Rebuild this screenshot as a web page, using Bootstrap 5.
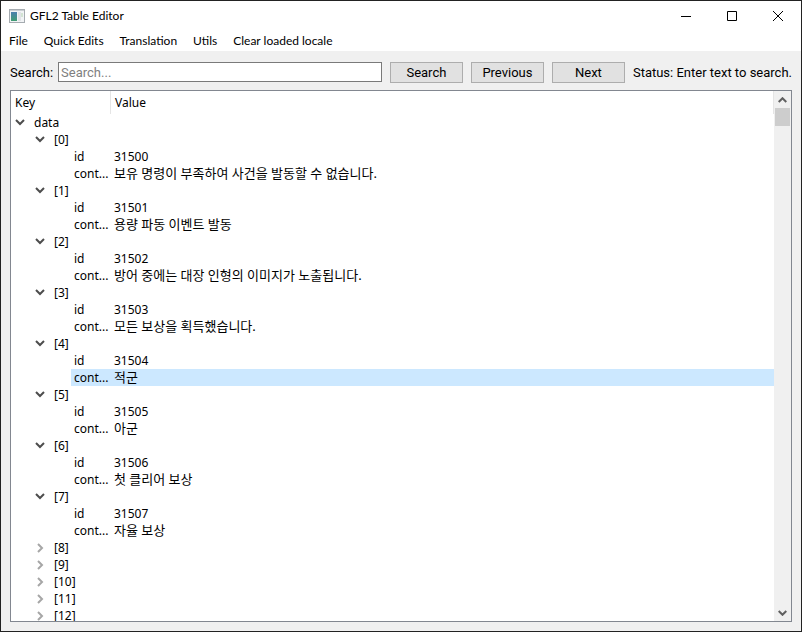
<!DOCTYPE html>
<html lang="en">
<head>
<meta charset="utf-8">
<meta name="viewport" content="width=device-width, initial-scale=1">
<title>GFL2 Table Editor</title>
<link href="https://cdn.jsdelivr.net/npm/bootstrap@5.3.0/dist/css/bootstrap.min.css" rel="stylesheet">
<style>
body { font: 12px/17px "Noto Sans", "Noto Sans CJK KR", sans-serif; color: #000; }
.app-window { border: 1px solid #222; background: #f0f0f0; }
.app-head { font-family: Lato, "Noto Sans", sans-serif; }
.title-bar { height: 29px; padding-left: 8px; }
.title-bar h1 { font-size: 12px; line-height: 17px; padding-left: 5px; }
.caption-btn { width: 46px; height: 29px; border: 0; background: none; padding: 0; display: flex; align-items: center; justify-content: center; }
.caption-btn:hover { background: #e5e5e5; }
.menu-row { height: 21px; gap: 16px; padding-left: 8px; }
.menu-row button { border: 0; background: none; padding: 0; color: #000; line-height: 21px; }
.work-area { padding: 11px 9px 9px; gap: 7px; min-height: 0; }
.search-row { font-family: Roboto, sans-serif; font-size: 13px; line-height: 21px; gap: 8px; height: 21px; }
.search-row label { margin-right: -3px; }
.search-row .form-control { height: 20px; min-width: 0; border: 1px solid #7a7a7a; border-radius: 0; padding: 0 2px; font-size: 13px; line-height: 18px; color: #000; }
.search-row .form-control::placeholder { color: #7f7f7f; }
.search-row .btn { width: 73px; height: 21px; border: 1px solid #adadad; border-radius: 0; background: #e1e1e1; padding: 0; font-size: 13px; line-height: 19px; color: #000; }
.search-row output { line-height: 21px; }
.tree-frame { border: 1px solid #828790; background: #fff; min-height: 0; }
.tree { width: 100%; table-layout: fixed; border-collapse: separate; border-spacing: 0; }
.tree th { height: 23px; padding: 0 4px; font-weight: 400; border-right: 1px solid #e5e5e5; }
.tree td { height: 17px; padding: 0 3px; line-height: 17px; white-space: nowrap; overflow: hidden; }
.tree .key-col { width: 100px; }
.tree td.hangul { font-size: 13px; }
.node { display: flex; align-items: center; height: 17px; overflow: hidden; }
.depth-1 { padding-left: 20px; }
.leaf { display: block; margin-left: 57px; margin-right: -3px; padding-left: 3px; height: 17px; overflow: hidden; }
.picked .leaf, .picked .hangul { background: #cce8ff; }
.twist { width: 20px; height: 17px; border: 0; background: none; padding: 0; color: #4d4d4d; display: flex; align-items: center; }
.twist.closed { color: #a6a6a6; }
.scroll-track { width: 17px; padding-left: 1px; background: #f0f0f0; }
.scroll-track button { width: 15px; height: 17px; border: 0; background: none; padding: 0; display: flex; align-items: center; justify-content: center; color: #606060; }
.scroll-thumb { width: 15px; height: 18px; background: #cdcdcd; }
</style>
<script src="https://cdn.jsdelivr.net/npm/bootstrap@5.3.0/dist/js/bootstrap.bundle.min.js" defer></script>
</head>
<body>
<svg class="d-none" aria-hidden="true">
  <symbol id="down" viewBox="0 0 12 12"><path d="M2 3l4 4 4-4" fill="none" stroke="currentColor" stroke-width="2"/></symbol>
  <symbol id="right" viewBox="0 0 12 12"><path d="M4 2l4 4-4 4" fill="none" stroke="currentColor" stroke-width="2"/></symbol>
</svg>
<div class="app-window vh-100 d-flex flex-column overflow-hidden">
  <header class="app-head bg-white">
    <div class="title-bar d-flex align-items-center">
      <svg width="16" height="14" viewBox="0 0 16 14" aria-hidden="true">
        <defs><linearGradient id="g" x1="0" y1="0" x2="0" y2="1"><stop offset="0" stop-color="#4b7fae"/><stop offset="1" stop-color="#3f9c72"/></linearGradient></defs>
        <rect x=".5" y=".5" width="15" height="13" fill="#f1f3f5" stroke="#a5abb0"/>
        <path d="M1 1.500h14" stroke="#c9ced2"/>
        <rect x="2" y="3" width="6" height="9" fill="url(#g)"/>
        <rect x="9" y="3" width="3" height="9" fill="#e0e3e6"/>
        <rect x="12" y="4" width="2" height="4" fill="#d2e3d3"/>
      </svg>
      <h1 class="mb-0 fw-normal flex-grow-1">GFL2 Table Editor</h1>
      <button class="caption-btn" type="button" aria-label="Minimize"><svg width="10" height="10"><path d="M0 5.500h10" stroke="#000"/></svg></button>
      <button class="caption-btn" type="button" aria-label="Maximize"><svg width="10" height="10"><path d="M.5.5h9v9h-9z" fill="none" stroke="#000"/></svg></button>
      <button class="caption-btn" type="button" aria-label="Close"><svg width="10" height="10"><path d="M0 0l10 10M10 0L0 10" stroke="#000"/></svg></button>
    </div>
    <nav class="menu-row d-flex" aria-label="Main menu">
      <button type="button">File</button><button type="button">Quick Edits</button><button type="button">Translation</button><button type="button">Utils</button><button type="button">Clear loaded locale</button>
    </nav>
  </header>
  <main class="work-area d-flex flex-column flex-grow-1">
    <form class="search-row d-flex align-items-start flex-shrink-0">
      <label for="query">Search:</label>
      <input id="query" class="form-control flex-grow-1 w-auto" type="text" placeholder="Search...">
      <button class="btn flex-shrink-0" type="button">Search</button>
      <button class="btn flex-shrink-0" type="button">Previous</button>
      <button class="btn flex-shrink-0" type="button">Next</button>
      <output class="text-nowrap p-0" for="query">Status: Enter text to search.</output>
    </form>
    <div class="tree-frame d-flex flex-grow-1">
      <div class="flex-grow-1 overflow-hidden">
        <table class="tree">
          <thead><tr><th class="key-col" scope="col">Key</th><th scope="col">Value</th></tr></thead>
          <tbody id="rows"></tbody>
        </table>
      </div>
      <div class="scroll-track d-flex flex-column flex-shrink-0">
        <button type="button" aria-label="Scroll up"><svg width="9" height="6"><path d="M.7 5l3.800-3.800L8.300 5" fill="none" stroke="currentColor" stroke-width="2"/></svg></button>
        <div class="scroll-thumb"></div>
        <button class="mt-auto" type="button" aria-label="Scroll down"><svg width="9" height="6"><path d="M.7 1l3.800 3.800L8.300 1" fill="none" stroke="currentColor" stroke-width="2"/></svg></button>
      </div>
    </div>
  </main>
</div>
<script>
const entries = [
  [31500, "보유 명령이 부족하여 사건을 발동할 수 없습니다."],
  [31501, "용량 파동 이벤트 발동"],
  [31502, "방어 중에는 대장 인형의 이미지가 노출됩니다."],
  [31503, "모든 보상을 획득했습니다."],
  [31504, "적군"],
  [31505, "아군"],
  [31506, "첫 클리어 보상"],
  [31507, "자율 보상"]
];
const pickedId = 31504;
const node = (label, depth, open) =>
  `<tr><td><div class="node depth-${depth}"><button type="button" class="twist ${open ? "" : "closed"}" aria-expanded="${open}" aria-label="Toggle ${label}"><svg width="12" height="12"><use href="#${open ? "down" : "right"}"/></svg></button>${label}</div></td><td></td></tr>`;
let html = node("data", 0, true);
entries.forEach(([id, text], i) => {
  html += node(`[${i}]`, 1, true);
  html += `<tr><td><span class="leaf">id</span></td><td>${id}</td></tr>`;
  html += `<tr class="${id === pickedId ? "picked" : ""}"><td><span class="leaf">cont...</span></td><td class="hangul" lang="ko">${text}</td></tr>`;
});
for (let i = 8; i <= 12; i++) html += node(`[${i}]`, 1, false);
document.getElementById("rows").innerHTML = html;
</script>
</body>
</html>
